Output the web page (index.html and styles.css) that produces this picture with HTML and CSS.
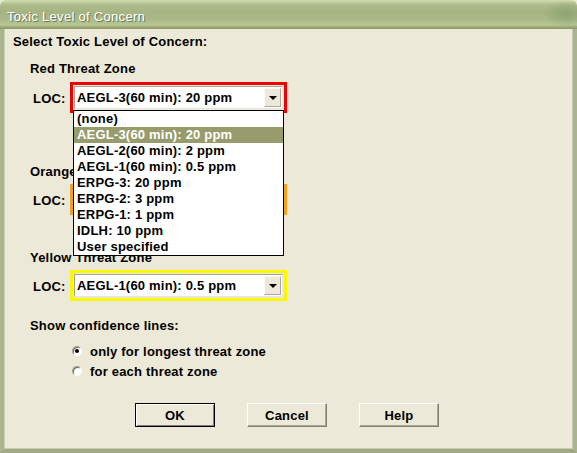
FILE: index.html
```html
<!DOCTYPE html>
<html>
<head>
<meta charset="utf-8">
<link rel="stylesheet" href="styles.css">
</head>
<body>
<div class="window">
  <div class="titlebar"><span class="title">Toxic Level of Concern</span></div>
  <div class="client">
    <div class="heading">Select Toxic Level of Concern:</div>

    <div class="zone zone-red">
      <div class="zone-title">Red Threat Zone</div>
      <div class="zone-row">
        <span class="loc">LOC:</span>
        <div class="box box-red">
          <div class="combo"><span class="value">AEGL-3(60 min): 20 ppm</span><span class="arrow"><i></i></span></div>
          <ul class="list">
            <li>(none)</li>
            <li class="sel">AEGL-3(60 min): 20 ppm</li>
            <li>AEGL-2(60 min): 2 ppm</li>
            <li>AEGL-1(60 min): 0.5 ppm</li>
            <li>ERPG-3: 20 ppm</li>
            <li>ERPG-2: 3 ppm</li>
            <li>ERPG-1: 1 ppm</li>
            <li>IDLH: 10 ppm</li>
            <li>User specified</li>
          </ul>
        </div>
      </div>
    </div>

    <div class="zone zone-orange">
      <div class="zone-title">Orange Threat Zone</div>
      <div class="zone-row">
        <span class="loc">LOC:</span>
        <div class="box box-orange">
          <div class="combo"><span class="value">AEGL-2(60 min): 2 ppm</span><span class="arrow"><i></i></span></div>
        </div>
      </div>
    </div>

    <div class="zone zone-yellow">
      <div class="zone-title">Yellow Threat Zone</div>
      <div class="zone-row">
        <span class="loc">LOC:</span>
        <div class="box box-yellow">
          <div class="combo"><span class="value">AEGL-1(60 min): 0.5 ppm</span><span class="arrow"><i></i></span></div>
        </div>
      </div>
    </div>

    <div class="confidence">
      <div class="zone-title">Show confidence lines:</div>
      <div class="radios">
        <div class="radio-row"><span class="radio checked"></span>only for longest threat zone</div>
        <div class="radio-row"><span class="radio"></span>for each threat zone</div>
      </div>
    </div>

    <div class="buttons">
      <button class="btn default">OK</button>
      <button class="btn">Cancel</button>
      <button class="btn">Help</button>
    </div>
  </div>
</div>
</body>
</html>
```
FILE: styles.css
```css
* { box-sizing: border-box; }
html, body { margin: 0; padding: 0; }
body {
  width: 577px;
  height: 453px;
  overflow: hidden;
  font-family: "Liberation Sans", Arial, sans-serif;
  background: #ECE9D8;
}
.window {
  width: 577px;
  height: 453px;
  display: flex;
  flex-direction: column;
  background: #ECE9D8;
}
.titlebar {
  height: 29px;
  flex: none;
  border-radius: 6px 6px 0 0;
  background:
    radial-gradient(ellipse 22px 14px at 566px 14px, rgba(120,150,100,0.55), rgba(120,150,100,0) 100%),
    linear-gradient(#d3ddb4 0, #c2cf9e 2px, #adbb8a 5px, #a6b382 12px, #aab887 19px, #b9c795 25px, #9aa877 27px, #8c9966 29px);
  padding: 7px 0 0 7px;
}
.title {
  color: #ffffff;
  font-size: 13px;
  line-height: 16px;
  letter-spacing: 0.3px;
  text-shadow: 1px 1px 0 #6d7a52;
  font-family: "Liberation Sans", Tahoma, sans-serif;
}
.client {
  flex: 1;
  border-left: 4px solid #aab48f;
  border-right: 4px solid #aab48f;
  border-bottom: 4px solid #a0aa84;
  box-shadow: inset 1px 0 0 #c6cdb0, inset -1px 0 0 #c6cdb0, inset 0 -1px 0 #c6cdb0;
  padding: 5px 0 0 9px;
  font-size: 13px;
  font-weight: bold;
  letter-spacing: 0.2px;
  color: #000;
  position: relative;
}
.heading { line-height: 16px; }
.zone { margin-left: 17px; }
.zone-title { line-height: 16px; }
.zone-red { margin-top: 11px; }
.zone-orange { margin-top: 51px; }
.zone-yellow { margin-top: 35px; }
.zone-row {
  display: flex;
  align-items: center;
  margin-top: 5px;
}
.zone-orange .zone-row, .zone-yellow .zone-row { margin-top: 4px; }
.loc {
  width: 40px;
  padding-left: 3px;
  line-height: 16px;
  position: relative;
  top: 1px;
}
.box {
  width: 217px;
  height: 31px;
  border: 3px solid;
  padding: 1px;
  position: relative;
}
.box-red { border-color: #ee0000; }
.box-orange { border-color: #f5a020; }
.box-yellow { border-color: #f8f800; }
.combo {
  height: 23px;
  background: #fff;
  border: 1px solid;
  border-color: #a6a398 #e8e6dc #e8e6dc #a6a398;
  display: flex;
  align-items: center;
  justify-content: space-between;
  padding: 0 1px 0 2px;
}
.value { line-height: 16px; }
.arrow {
  width: 17px;
  height: 19px;
  background: #ece9d8;
  border: 1px solid;
  border-color: #fbfaf5 #aca899 #aca899 #fbfaf5;
  display: flex;
  align-items: center;
  justify-content: center;
}
.arrow i {
  width: 0;
  height: 0;
  border-left: 4px solid transparent;
  border-right: 4px solid transparent;
  border-top: 4px solid #000;
  margin-top: 1px;
}
.list {
  position: absolute;
  left: 0;
  top: 25px;
  width: 211px;
  margin: 0;
  padding: 0;
  list-style: none;
  background: #fff;
  border: 1px solid #000;
  z-index: 2;
}
.list li {
  height: 16px;
  line-height: 16px;
  padding-left: 3px;
}
.list li.sel {
  background: #989b6c;
  color: #fff;
}
.confidence { margin-left: 17px; margin-top: 17px; }
.radios { margin-left: 42px; margin-top: 7px; }
.radio-row {
  height: 20px;
  display: flex;
  align-items: center;
}
.radio {
  width: 10px;
  height: 10px;
  border-radius: 50%;
  border: 1px solid;
  border-color: #9d9a8c #ffffff #ffffff #9d9a8c;
  background: #fff;
  box-shadow: inset 1px 1px 0 #6e6c62;
  margin-right: 8px;
  position: relative;
}
.radio.checked::after {
  content: "";
  position: absolute;
  left: 2px;
  top: 2px;
  width: 4px;
  height: 4px;
  border-radius: 50%;
  background: #000;
}
.buttons {
  display: flex;
  gap: 32px;
  margin-left: 122px;
  margin-top: 22px;
}
.btn {
  width: 80px;
  height: 24px;
  font-family: "Liberation Sans", Arial, sans-serif;
  font-size: 13px;
  font-weight: bold;
  letter-spacing: 0.2px;
  color: #000;
  background: #ece9d8;
  border: 1px solid;
  border-color: #ffffff #808078 #808078 #ffffff;
  box-shadow: inset -1px -1px 0 #aca899;
  padding: 0;
}
.btn.default {
  border: 1px solid #000;
  box-shadow: inset 1px 1px 0 #fff, inset -1px -1px 0 #808078;
}
```
